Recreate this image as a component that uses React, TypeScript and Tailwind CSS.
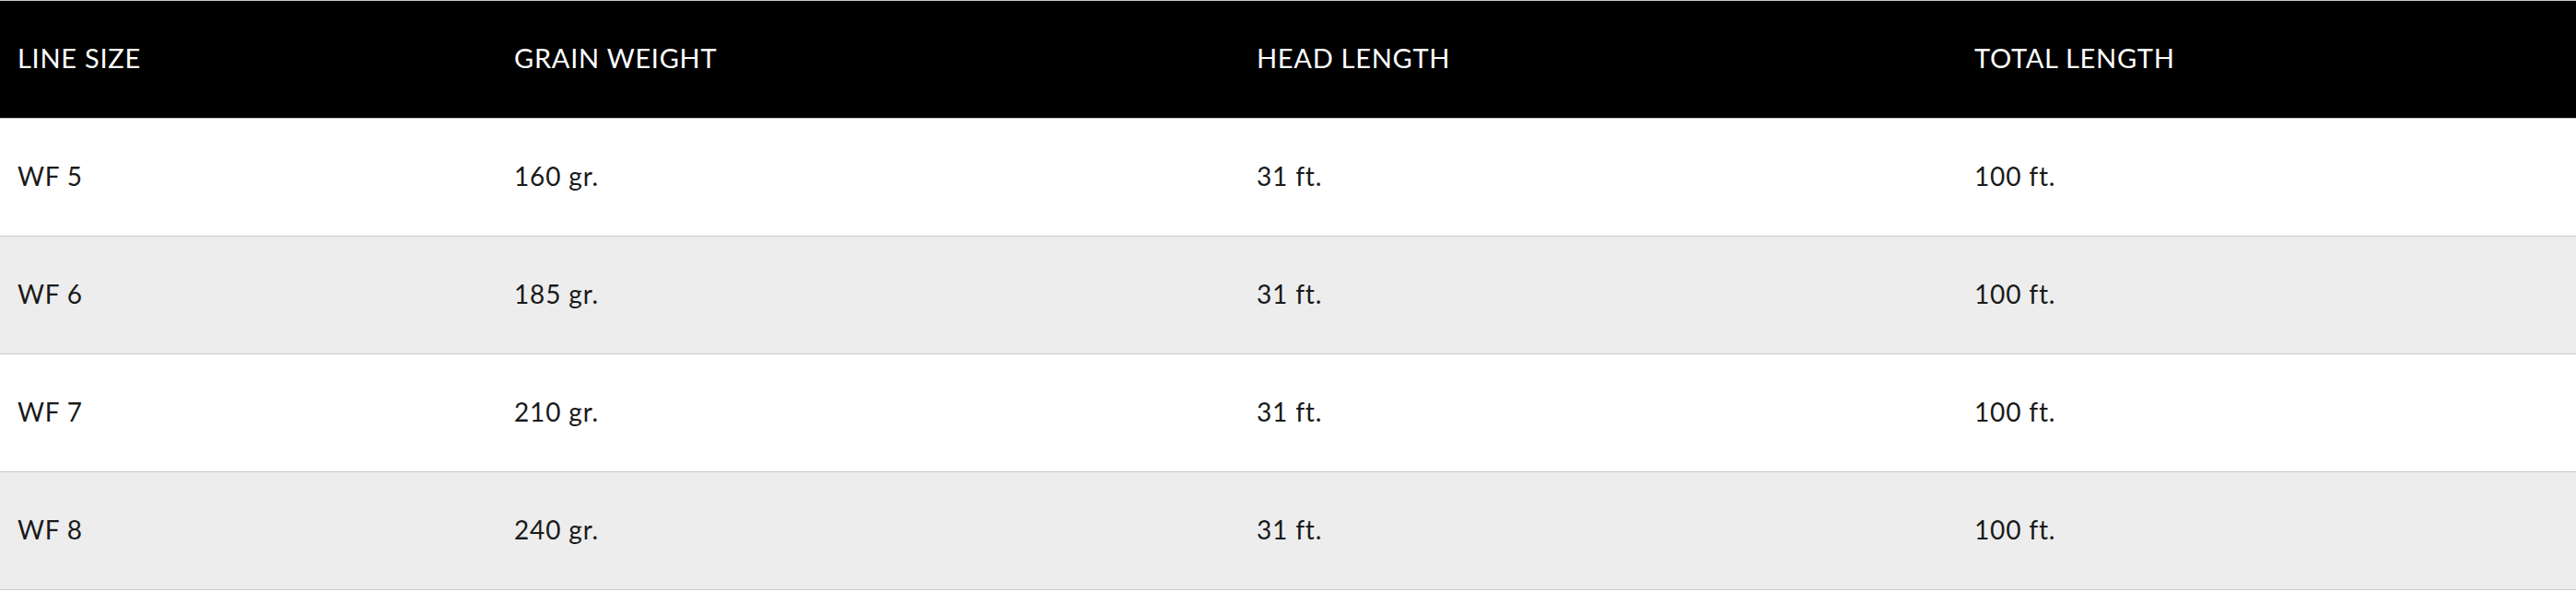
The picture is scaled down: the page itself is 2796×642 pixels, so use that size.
const headers = ['LINE SIZE', 'GRAIN WEIGHT', 'HEAD LENGTH', 'TOTAL LENGTH'];

const rows = [
  ['WF 5', '160 gr.', '31 ft.', '100 ft.'],
  ['WF 6', '185 gr.', '31 ft.', '100 ft.'],
  ['WF 7', '210 gr.', '31 ft.', '100 ft.'],
  ['WF 8', '240 gr.', '31 ft.', '100 ft.'],
];

export default function App() {
  return (
    <div className="w-full bg-white font-['Lato','Noto_Sans',sans-serif]">
      <div className="border-t border-[#c9c9c9]">
        {/* header */}
        <div className="grid h-[127px] grid-cols-[539px_806px_779px_1fr] items-center bg-black pb-[3px] text-[29px] tracking-[0.025em] text-white">
          {headers.map((h) => (
            <div key={h} className="px-[19px]">
              {h}
            </div>
          ))}
        </div>
        {rows.map((r, i) => (
          <div
            key={r[0]}
            className={`grid h-[128px] grid-cols-[539px_806px_779px_1fr] items-center border-t border-[#c9c9c9] pb-[3px] text-[28px] tracking-[0.03em] text-[#1a1a1a] ${
              i % 2 === 1 ? 'bg-[#ededed]' : 'bg-white'
            }`}
          >
            {r.map((c, j) => (
              <div key={j} className="px-[19px]">
                {c}
              </div>
            ))}
          </div>
        ))}
        <div className="border-t border-[#c9c9c9]" />
      </div>
    </div>
  );
}
